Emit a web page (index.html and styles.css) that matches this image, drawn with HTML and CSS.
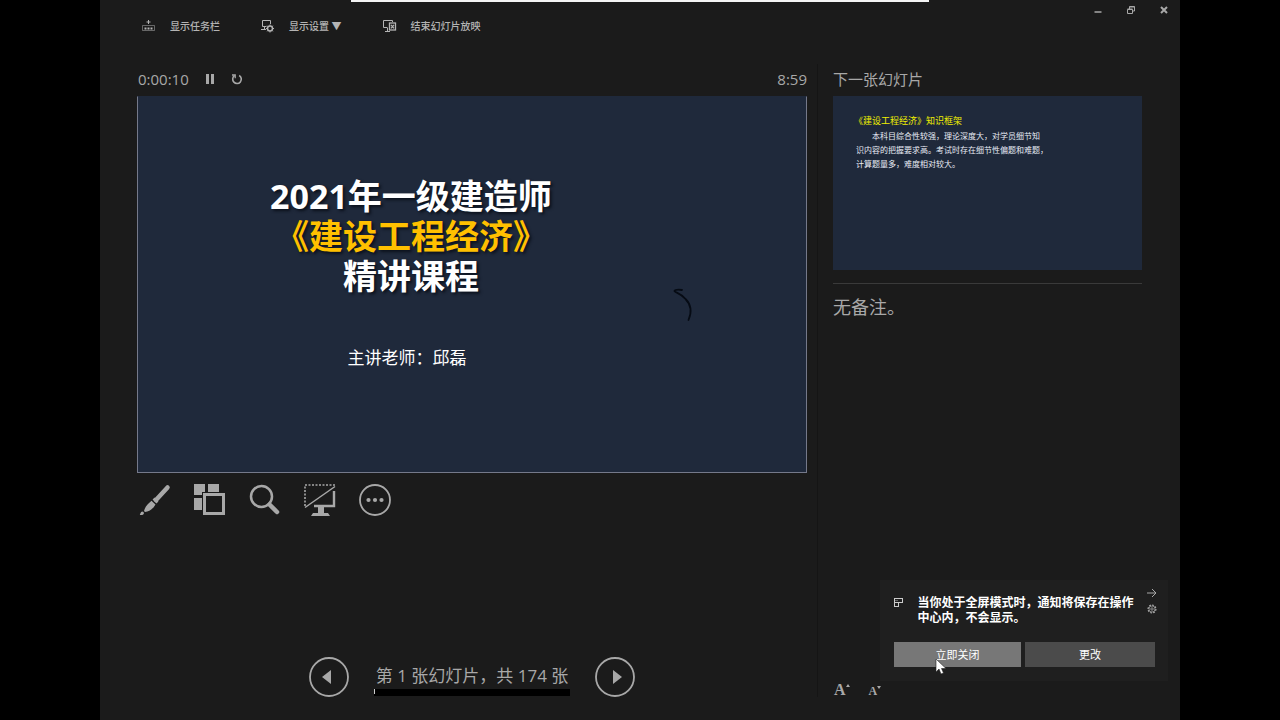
FILE: index.html
```html
<!DOCTYPE html>
<html lang="zh-CN">
<head>
<meta charset="utf-8">
<meta name="viewport" content="width=device-width, initial-scale=1">
<title>演示者视图</title>
<link rel="stylesheet" href="styles.css">
</head>
<body>
<div class="window">
  <div class="share-bar"></div>

  <header class="topbar">
    <nav class="toolbar">
      <button class="command">
        <svg width="14" height="14" viewBox="0 0 14 14" fill="none" stroke="currentColor"><path d="M6.500 5V1M4.500 3h4"/><path d="M.5 11.500V6.500h12v5z" opacity=".5"/><path d="M2.500 9.500h2M5.500 9.500h2M8.500 9.500h2" stroke-width="2"/></svg>
        <span>显示任务栏</span>
      </button>
      <button class="command">
        <svg width="14" height="14" viewBox="0 0 14 14" fill="none" stroke="currentColor"><path d="M5.500 7.500h-4v-6h8V5M0 10.500h5M3.500 8v2"/><circle cx="9" cy="9.500" r="2.500" stroke-width="1.500"/><path d="M9 5.500v1.300M9 12.200v1.300M5 9.500h1.300M11.700 9.500h1.300M6.200 6.700l.9.9M10.900 11.400l.9.9M11.800 6.700l-.9.900M7.100 11.400l-.9.900"/></svg>
        <span>显示设置 ▼</span>
      </button>
      <button class="command">
        <svg width="14" height="14" viewBox="0 0 14 14" fill="none" stroke="currentColor"><path d="M4.500 8.500h-4v-7h9V3M4.500 9v3.500M2 12.500h5"/><rect x="6.500" y="4" width="6" height="7" stroke-width="1.300"/><path d="M8 5.800l3 3.500M11 5.800l-3 3.500" stroke-width="1.300"/></svg>
        <span>结束幻灯片放映</span>
      </button>
    </nav>
    <div class="window-controls">
      <button aria-label="最小化"><svg width="8" height="8" viewBox="0 0 8 8" stroke="currentColor" stroke-width="1.500"><path d="M.5 6h7"/></svg></button>
      <button aria-label="还原"><svg width="8" height="8" viewBox="0 0 8 8" fill="none" stroke="currentColor"><path d="M.5 3.500h5v4h-5zM.5 3h5M2.500 3V.5h5v4.500H6M2.500 1h5"/></svg></button>
      <button aria-label="关闭"><svg width="8" height="8" viewBox="0 0 8 8" stroke="currentColor" stroke-width="2"><path d="M1 1l6 6M7 1L1 7"/></svg></button>
    </div>
  </header>

  <main class="panes">
    <section class="current">
      <div class="status">
        <span>0:00:10</span>
        <button aria-label="暂停"><svg width="8" height="10" viewBox="0 0 8 10" fill="currentColor"><path d="M0 0h3v10H0zM5 0h3v10H5z"/></svg></button>
        <button aria-label="重新开始"><svg width="12" height="12" viewBox="0 0 12 12" fill="none" stroke="currentColor" stroke-width="1.600"><path d="M8.200 2.500a4.300 4.300 0 1 1-4.700.2"/><path d="M1 2h3.200v3.300" stroke-width="1.300"/></svg></button>
        <span class="clock">8:59</span>
      </div>
      <div class="slide">
        <h1>2021年一级建造师<br><em>《建设工程经济》</em><br>精讲课程</h1>
        <p>主讲老师：邱磊</p>
        <svg class="ink" width="24" height="34" viewBox="0 0 24 34" fill="none" stroke="#060b14" stroke-width="1.800" stroke-linecap="round"><path d="M10 2C6 1.500 3 2 2.500 3c1 2 6 2 11 8 6 6 6 14 3 21"/></svg>
      </div>
      <div class="tools">
        <button aria-label="笔和激光笔工具"><svg width="32" height="32" viewBox="0 0 32 32" fill="none" stroke="currentColor"><path d="M28.500 3.500L17 16" stroke-width="4.500" stroke-linecap="round"/><path d="M17.500 15.500L15.500 17.500" stroke-width="5.500"/><path fill="currentColor" stroke="none" d="M12.500 16.800l4 3.800-2 2.900c-2.500 2.500-5 4-8.500 4.500L5 27c.8-3 2.200-5.200 4.500-7.500zM3.200 27.500c2 0 2.600 3-.2 3.500H.8c.6-1 .7-3.300 2.400-3.500z"/></svg></button>
        <button aria-label="查看所有幻灯片"><svg width="32" height="32" viewBox="0 0 32 32" fill="currentColor"><path d="M0 0h11v8H8v3H0zM14 0h11v8H14zM0 14h8v12H0z"/><path fill-rule="evenodd" d="M9 9h22v22H9zM12 12v16h16V12z"/></svg></button>
        <button aria-label="放大幻灯片"><svg width="32" height="32" viewBox="0 0 32 32" fill="none" stroke="currentColor"><circle cx="12.500" cy="12.500" r="10.500" stroke-width="2.500"/><path d="M20.500 20.500l7.500 7.500" stroke-width="4.500" stroke-linecap="round"/></svg></button>
        <button aria-label="变黑或还原幻灯片"><svg width="32" height="32" viewBox="0 0 32 32" fill="none" stroke="currentColor"><path d="M1 22V1h30" stroke-dasharray="2 1.500" stroke-width="1.600"/><path d="M1 23.500L31 2.500" stroke-width="1.500"/><path d="M30 7v15H10" stroke-width="2.400"/><path fill="currentColor" stroke="none" d="M14 22h6v7h4l2 3H7l2-3h5z"/></svg></button>
        <button aria-label="更多选项"><svg width="32" height="32" viewBox="0 0 32 32" fill="none" stroke="currentColor"><circle cx="16" cy="16" r="15" stroke-width="1.800"/><g fill="currentColor" stroke="none"><circle cx="9.500" cy="16" r="2.100"/><circle cx="16" cy="16" r="2.100"/><circle cx="22.500" cy="16" r="2.100"/></g></svg></button>
      </div>
      <div class="pager">
        <button aria-label="上一张"><svg width="40" height="40" viewBox="0 0 40 40"><circle cx="20" cy="20" r="19" fill="none" stroke="currentColor" stroke-width="1.800"/><path d="M13 20l9-7v14z" fill="currentColor"/></svg></button>
        <div class="position">
          <span>第 1 张幻灯片，共 174 张</span>
          <div class="progress"><div class="progress-fill"></div></div>
        </div>
        <button aria-label="下一张"><svg width="40" height="40" viewBox="0 0 40 40"><circle cx="20" cy="20" r="19" fill="none" stroke="currentColor" stroke-width="1.800"/><path d="M27 20l-9-7v14z" fill="currentColor"/></svg></button>
      </div>
    </section>

    <aside class="upcoming">
      <h2>下一张幻灯片</h2>
      <div class="preview">
        <h3>《建设工程经济》知识框架</h3>
        <p class="lead">本科目综合性较强，理论深度大，对学员细节知</p>
        <p>识内容的把握要求高。考试时存在细节性偏题和难题，</p>
        <p>计算题量多，难度相对较大。</p>
      </div>
      <div class="notes">无备注。</div>
      <div class="text-size">
        <button class="larger" aria-label="放大文本">A<svg width="4" height="3" viewBox="0 0 4 3" fill="currentColor"><path d="M0 3l2-3 2 3z"/></svg></button>
        <button class="smaller" aria-label="缩小文本">A<svg width="4" height="3" viewBox="0 0 4 3" fill="currentColor"><path d="M0 0h4L2 3z"/></svg></button>
      </div>
    </aside>
  </main>

  <div class="toast" role="alert">
    <div class="toast-body">
      <svg class="toast-icon" width="10" height="10" viewBox="0 0 10 10" fill="none" stroke="currentColor"><path d="M0 .5h9M.5 0v9M0 4.500h9M8.500 0v5M4.500 4.500v4M0 8.500h5"/><path d="M1 2.500h3" opacity=".4"/></svg>
      <p>当你处于全屏模式时，通知将保存在操作中心内，不会显示。</p>
      <div class="toast-side">
        <button aria-label="关闭通知"><svg width="10" height="10" viewBox="0 0 10 10" fill="none" stroke="currentColor"><path d="M0 5h9M5 1l4 4-4 4"/></svg></button>
        <button aria-label="通知设置"><svg width="10" height="10" viewBox="0 0 10 10" fill="none" stroke="currentColor"><circle cx="5" cy="5" r="3.900" stroke-dasharray="1.800 1.200" stroke-width="1.300"/><circle cx="5" cy="5" r="3" stroke-width=".7"/><circle cx="5" cy="5" r="1.200" stroke-width=".8"/></svg></button>
      </div>
    </div>
    <div class="toast-actions">
      <button class="active">立即关闭</button>
      <button>更改</button>
    </div>
    <svg class="cursor" width="12" height="18" viewBox="0 0 12 18"><path d="M1 1v13l3-3 2 5 2.500-1-2-4.500H11z" fill="#fff" stroke="#222" stroke-width=".6"/></svg>
  </div>
</div>
</body>
</html>
```
FILE: styles.css
```css
* { box-sizing: border-box; }

body {
  margin: 0;
  background: #000;
  color: #a8a8a8;
  font-family: "Open Sans", "Noto Sans CJK SC", sans-serif;
}

h1, h2, h3, p { margin: 0; font-weight: 400; }

button {
  display: flex;
  align-items: center;
  padding: 0;
  border: 0;
  background: none;
  color: inherit;
  font: inherit;
}

svg { display: block; flex: none; }

.window {
  position: relative;
  display: flex;
  flex-direction: column;
  min-height: 100vh;
  margin: 0 100px;
  background: #1b1b1b;
}

.share-bar {
  position: absolute;
  top: 0;
  left: 251px;
  right: 251px;
  height: 2px;
  background: #f4f4f4;
}

.topbar {
  display: flex;
  justify-content: space-between;
  height: 64px;
  padding: 6px 12px 0 42px;
}

.toolbar {
  display: flex;
  align-items: flex-start;
  gap: 41px;
  padding-top: 12px;
}

.command {
  gap: 14px;
  height: 16px;
  color: #b4b4b4;
  font-size: 10px;
  font-weight: 500;
  line-height: 16px;
  white-space: nowrap;
}

.window-controls {
  display: flex;
  align-items: flex-start;
  gap: 25px;
}

.window-controls button { height: 8px; }

.panes {
  display: grid;
  grid-template-columns: 717fr 363fr;
  flex: 1;
  padding-bottom: 23px;
}

.current {
  display: flex;
  flex-direction: column;
  min-width: 0;
  padding: 0 10px 0 37px;
}

.status {
  display: flex;
  align-items: center;
  height: 32px;
  gap: 17px;
  padding: 0 0 2px 1px;
  font-size: 15px;
}

.clock { margin-left: auto; }

.slide {
  position: relative;
  aspect-ratio: 670 / 377;
  padding: 79px 122px 0 0;
  border: 1px solid #75798a;
  border-top-color: #1f293b;
  background: #1f293b;
  color: #fff;
  text-align: center;
}

.slide h1 {
  font-size: 34px;
  font-weight: 700;
  line-height: 40px;
  text-shadow: 2px 2px 3px #0b111c;
}

.slide em { color: #ffc000; font-style: normal; }

.slide p {
  margin-top: 50px;
  padding-right: 8px;
  font-size: 17px;
  line-height: 24px;
}

.ink {
  position: absolute;
  top: 51%;
  left: 80%;
}

.tools {
  display: flex;
  gap: 23px;
  padding: 11px 2px;
}

.pager {
  display: flex;
  align-items: center;
  justify-content: center;
  gap: 25px;
  margin-top: auto;
}

.position {
  width: 196px;
  padding-top: 6px;
  font-size: 17px;
  line-height: 24px;
  text-align: center;
  white-space: nowrap;
}

.progress { height: 7px; margin-top: 1px; background: #000; }
.progress-fill { width: 1px; height: 5px; background: #ccc; }

.upcoming {
  display: flex;
  flex-direction: column;
  min-width: 0;
  padding: 0 38px 0 15px;
  border-left: 1px solid #151515;
}

.upcoming h2 { height: 32px; font-size: 15px; line-height: 30px; }

.preview {
  aspect-ratio: 309 / 174;
  padding: 17px 0 0 23px;
  background: #1f293b;
  color: #e8ecf5;
  font-size: 8px;
  line-height: 14px;
  white-space: nowrap;
}

.preview h3 { margin-left: -2px; color: #f0f000; font-size: 9px; line-height: 16px; }
.lead { text-indent: 2em; }

.notes {
  margin-top: 13px;
  padding-top: 11px;
  border-top: 1px solid #3a3a3a;
  font-size: 18px;
  line-height: 24px;
}

.text-size {
  display: flex;
  align-items: baseline;
  gap: 19px;
  margin-top: auto;
  padding-left: 1px;
  font-family: "Liberation Serif", serif;
  font-weight: 700;
  line-height: 11px;
}

.text-size button { align-items: flex-start; }
.larger { font-size: 16px; }
.smaller { font-size: 12px; }

.toast {
  position: absolute;
  right: 12px;
  bottom: 39px;
  width: 288px;
  padding: 8px 13px 14px 14px;
  background: #1f1f1f;
}

.toast-body {
  display: flex;
  justify-content: space-between;
  margin-right: -2px;
}

.toast-icon { margin-top: 10px; color: #ccc; }

.toast-body p {
  flex: none;
  width: 216px;
  margin: 7px 0 17px;
  color: #fff;
  font-size: 12px;
  font-weight: 700;
  line-height: 15px;
}

.toast-side { display: flex; flex-direction: column; gap: 6px; }

.toast-actions {
  display: grid;
  grid-template-columns: 127fr 130fr;
  gap: 4px;
}

.toast-actions button {
  justify-content: center;
  height: 25px;
  padding-bottom: 2px;
  background: #4b4b4b;
  color: #fff;
  font-size: 11px;
}

.toast-actions .active { background: #777; }

.cursor {
  position: absolute;
  top: 78px;
  left: 55px;
}
```
